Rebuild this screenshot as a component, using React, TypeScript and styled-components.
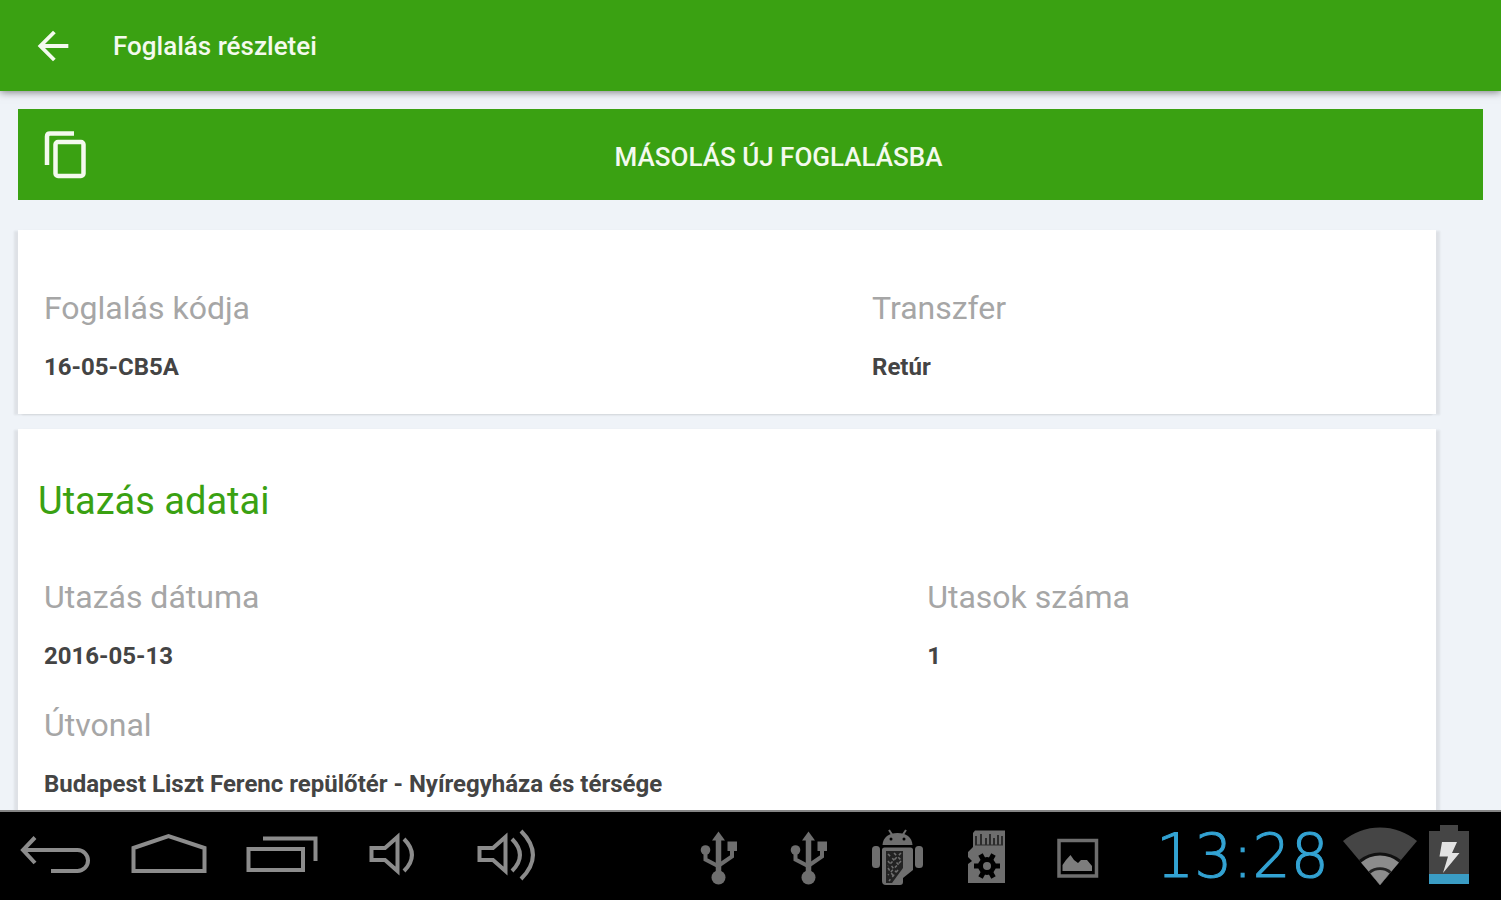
import React from "react";
import styled, { createGlobalStyle } from "styled-components";

const GlobalStyle = createGlobalStyle`
  *, *::before, *::after { box-sizing: border-box; }
  html, body, #root { height: 100%; }
  body {
    margin: 0;
    background: #eff3f8;
    font-family: Roboto, "Noto Sans", sans-serif;
  }
`;

const green = "#3aa112";

const Page = styled.div`
  display: flex;
  flex-direction: column;
  height: 100vh;
  overflow: hidden;
`;

const AppBar = styled.header`
  display: flex;
  align-items: center;
  flex: none;
  height: 91px;
  padding: 0 30px;
  gap: 37px;
  background: ${green};
  color: #f4faee;
  box-shadow: 0 1px 8px rgba(0, 0, 0, 0.5);
  z-index: 1;
`;

const IconButton = styled.button`
  display: flex;
  flex: none;
  padding: 0;
  border: 0;
  background: none;
  color: inherit;
  cursor: pointer;
`;

const Title = styled.h1`
  margin: 0;
  font-size: 26px;
  line-height: 32px;
  font-weight: 500;
`;

const Content = styled.main`
  flex: 1;
  min-height: 0;
  overflow: hidden;
  padding: 18px 18px 0;
`;

const CopyButton = styled.button`
  display: flex;
  align-items: center;
  width: 100%;
  height: 91px;
  padding: 0 24px;
  border: 0;
  background: ${green};
  color: #f4faee;
  font-family: inherit;
  font-size: 26px;
  line-height: 32px;
  font-weight: 500;
  cursor: pointer;
`;

const CopyLabel = styled.span`
  flex: 1;
  padding-left: 10px;
  padding-top: 4px;
  text-align: center;
`;

const Cards = styled.div`
  display: flex;
  flex-direction: column;
  gap: 15px;
  margin: 30px 47px 0 0;
`;

const Card = styled.section<{ $top: number }>`
  padding: ${(p) => p.$top}px 12px 31px 26px;
  background: #fff;
  box-shadow: -4px 1px 2px rgba(0, 0, 0, 0.07), 4px 1px 2px rgba(0, 0, 0, 0.07);
`;

const CardTitle = styled.h2`
  margin: 0 0 52px -6px;
  color: ${green};
  font-size: 38px;
  line-height: 48px;
  font-weight: 400;
`;

const Fields = styled.dl<{ $columns: string }>`
  display: grid;
  grid-template-columns: ${(p) => p.$columns};
  row-gap: 33px;
  margin: 0;
`;

const Field = styled.div<{ $wide?: boolean }>`
  display: flex;
  flex-direction: column;
  gap: 23px;
  grid-column: ${(p) => (p.$wide ? "1 / -1" : "auto")};
`;

const Label = styled.dt`
  color: #a6a6a6;
  font-size: 32px;
  line-height: 40px;
`;

const Value = styled.dd`
  margin: 0;
  color: #444;
  font-size: 24px;
  line-height: 32px;
  font-weight: 700;
`;

const SystemBar = styled.footer`
  display: flex;
  align-items: center;
  justify-content: space-between;
  flex: none;
  height: 90px;
  padding: 0 30px 0 19px;
  border-top: 2px solid #858585;
  background: #000;
  z-index: 1;
`;

const NavKeys = styled.nav`
  display: flex;
  gap: 38px;
  color: #8c8c8c;
`;

const Status = styled.div`
  display: flex;
  align-items: center;
  color: #6e6e6e;
`;

const Notices = styled.div`
  display: flex;
  gap: 30px;
  margin-right: 42px;
`;

const Clock = styled.time`
  width: 187px;
  margin-right: 6px;
  color: #33a3d3;
  font-family: "DejaVu Sans", sans-serif;
  font-size: 60px;
  line-height: 64px;
  font-weight: 200;
  -webkit-text-stroke: 1px #33a3d3;
  text-align: center;
`;

const Signals = styled.div`
  display: flex;
  gap: 9px;
`;

const Icon = ({ w, children }: { w: number; children: React.ReactNode }) => (
  <svg width={w} height={88} viewBox={`0 0 ${w} 88`} fill="none" stroke="currentColor" strokeWidth={4} aria-hidden="true">
    {children}
  </svg>
);

const speaker = "M14.5 36H28L40.5 25V59L28 48H14.5Z";

const Usb = () => (
  <Icon w={60}>
    <path d="M31.500 26V62" strokeWidth={5.500} />
    <path d="M18.500 38V47.500L31 54M45 36V44.500L31 54" strokeWidth={4} />
    <g fill="currentColor" stroke="none">
      <path d="M31.500 19.500L38 28.500H25Z" />
      <circle cx={31.500} cy={65.500} r={7} />
      <circle cx={18.500} cy={38} r={4.800} />
      <rect x={40.500} y={29.500} width={9.500} height={9.500} />
    </g>
  </Icon>
);

const AndroidNotice = () => (
  <Icon w={60}>
    <path d="M22 18L26 24M39 18L35 24" strokeWidth={2} />
    <g fill="currentColor" stroke="none">
      <path d="M15.500 33C16 25 22 21 30.500 21S45 25 45.500 33Z" />
      <rect x={5} y={34} width={8} height={22} rx={3.500} />
      <rect x={48} y={34} width={8} height={22} rx={3.500} />
      <path d="M15 38Q15 35.500 17.500 35.500H43.500Q46 35.500 46 38V58L36 66V70Q36 73 33 73H19Q15 73 15 69Z" />
    </g>
    <g fill="#000" stroke="none">
      <circle cx={24} cy={27} r={1.500} />
      <circle cx={37} cy={27} r={1.500} />
    </g>
    <path d="M19 39H36V56L25 71H19Z" fill="#222" stroke="none" />
    <path d="M21 42L33 54M27 41L35 49M21 49L29 60M21 56L27 65M34 41L21 54M34 49L21 63M31 58L22 69" strokeWidth={1.500} strokeDasharray="3 3" />
  </Icon>
);

const CardNotice = () => (
  <Icon w={60}>
    <path d="M18 18.500H48V71H11V52L15 49L11 45V40L16 35V21Z" fill="currentColor" stroke="none" />
    <g stroke="#2c2c2c">
      <path d="M19 24V33M24 22V33M29 26V33M33 22V33M37 26V33M41 23V33M45 24V33" strokeWidth={2} />
      <path d="M18 33H46" strokeWidth={1} />
    </g>
    <g stroke="#000">
      <circle cx={30} cy={54} r={6.500} strokeWidth={5} />
      <path d="M38 54H43M22 54H17M34 61L36.500 65.500M26 61L23.500 65.500M34 47L36.500 42.500M26 47L23.500 42.500" strokeWidth={5} />
    </g>
  </Icon>
);

const PictureNotice = () => (
  <Icon w={60}>
    <rect x={12} y={28.500} width={37.500} height={35.500} strokeWidth={3.500} />
    <path d="M15.500 59V53L19 48L23.500 43L27 48L31 51L34 48H40L45 54V59Z" fill="#7d7d7d" stroke="none" />
  </Icon>
);

const Wifi = () => (
  <Icon w={76}>
    <g stroke="none">
      <path d="M38 73L1 29A57.500 57.500 0 0 1 75 29Z" fill="#454545" />
      <path d="M38 73L17 48A33 33 0 0 1 59 48Z" fill="#111" />
      <path d="M38 73L19 50.500A29.500 29.500 0 0 1 57 50.500Z" fill="#8c8c8c" />
      <path d="M38 73L26.500 59.500A18 18 0 0 1 49.500 59.500Z" fill="#222" />
      <path d="M38 73L28.500 61.500A15 15 0 0 1 47.500 61.500Z" fill="#8c8c8c" />
    </g>
  </Icon>
);

const Battery = () => (
  <Icon w={44}>
    <g stroke="none">
      <path d="M13 13H31V19H42V62H2V19H13Z" fill="#454545" />
      <rect x={2} y={62} width={40} height={10} fill="#3a9cc4" />
      <path d="M15 30H30L25 41H32.500L16 61L21 44.500H12.500Z" fill="#e2e2e2" />
    </g>
  </Icon>
);

export default function App() {
  return (
    <Page>
      <GlobalStyle />
      <AppBar>
        <IconButton type="button" aria-label="Vissza">
          <svg width={46} height={46} viewBox="0 0 24 24" fill="currentColor" aria-hidden="true">
            <path d="M20 11H7.830l5.590-5.590L12 4l-8 8 8 8 1.410-1.410L7.830 13H20v-2z" />
          </svg>
        </IconButton>
        <Title>Foglalás részletei</Title>
      </AppBar>

      <Content>
        <CopyButton type="button">
          <svg width={46} height={50} viewBox="0 0 46 50" fill="none" stroke="currentColor" strokeWidth={4.500} aria-hidden="true">
            <path d="M32 3.500H8Q5 3.500 5 6.500V35" />
            <rect x={13.500} y={12} width={28} height={34} rx={2.500} />
          </svg>
          <CopyLabel>MÁSOLÁS ÚJ FOGLALÁSBA</CopyLabel>
        </CopyButton>

        <Cards>
          <Card $top={58}>
            <Fields $columns="3fr 2fr">
              <Field>
                <Label>Foglalás kódja</Label>
                <Value>16-05-CB5A</Value>
              </Field>
              <Field>
                <Label>Transzfer</Label>
                <Value>Retúr</Value>
              </Field>
            </Fields>
          </Card>

          <Card $top={48}>
            <CardTitle>Utazás adatai</CardTitle>
            <Fields $columns="16fr 9fr">
              <Field>
                <Label>Utazás dátuma</Label>
                <Value>2016-05-13</Value>
              </Field>
              <Field>
                <Label>Utasok száma</Label>
                <Value>1</Value>
              </Field>
              <Field $wide>
                <Label>Útvonal</Label>
                <Value>Budapest Liszt Ferenc repülőtér - Nyíregyháza és térsége</Value>
              </Field>
            </Fields>
          </Card>
        </Cards>
      </Content>

      <SystemBar>
        <NavKeys>
          <IconButton type="button" aria-label="Vissza">
            <Icon w={72}>
              <path d="M16 25.500L4 38L16 51M4 38H58.500A10.500 10.500 0 0 1 58.500 59H32" />
            </Icon>
          </IconButton>
          <IconButton type="button" aria-label="Kezdőképernyő">
            <Icon w={78}>
              <path d="M4.500 36L39.500 24L75.500 36V59H4.500Z" />
            </Icon>
          </IconButton>
          <IconButton type="button" aria-label="Legutóbbiak">
            <Icon w={74}>
              <path d="M3.500 37H58V58H3.500ZM18 26.500H70.500V49" />
            </Icon>
          </IconButton>
          <IconButton type="button" aria-label="Halkítás">
            <Icon w={70}>
              <path d={speaker} />
              <path d="M47 27Q63 43 47 59" />
            </Icon>
          </IconButton>
          <IconButton type="button" aria-label="Hangosítás">
            <Icon w={78}>
              <path d={speaker} />
              <path d="M47 27Q63 43 47 59M56 19Q80 43 56 67" />
            </Icon>
          </IconButton>
        </NavKeys>
        <Status>
          <Notices>
            <Usb />
            <Usb />
            <AndroidNotice />
            <CardNotice />
            <PictureNotice />
          </Notices>
          <Clock dateTime="13:28">13:28</Clock>
          <Signals>
            <Wifi />
            <Battery />
          </Signals>
        </Status>
      </SystemBar>
    </Page>
  );
}
